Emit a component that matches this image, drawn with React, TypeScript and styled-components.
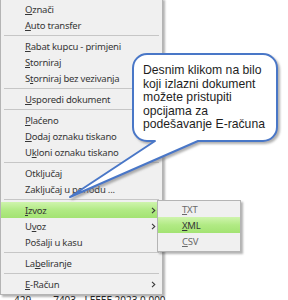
import React from "react";
import styled, { createGlobalStyle } from "styled-components";

const GlobalStyle = createGlobalStyle`
  html, body { margin: 0; padding: 0; background: #ffffff; overflow: hidden; }
  body { font-family: "Noto Sans", "Open Sans", sans-serif; }
`;

const Stage = styled.div`
  position: relative;
  width: 288px;
  height: 300px;
  overflow: hidden;
  background: #ffffff;
`;

const AppBackground = styled.div`
  display: flex;
  flex-direction: column;
  padding-top: 294px;
`;

const BgRow = styled.div`
  display: flex;
  gap: 22px;
  padding-left: 14px;
  font-family: "Noto Sans", sans-serif;
  font-size: 10px;
  line-height: 12px;
  color: #2a2a2a;
  white-space: nowrap;
`;

const Menu = styled.div`
  position: absolute;
  left: 0;
  top: -2px;
  width: 161px;
  background: #f0f0f0;
  border: 1px solid #b4b4b4;
  box-shadow: 2px 2px 2px rgba(0, 0, 0, 0.3);
  padding: 2px 0;
  display: flex;
  flex-direction: column;
`;

const SubMenu = styled(Menu)`
  left: 157px;
  top: 200px;
  width: 82px;
  padding: 0 0 2px 0;
`;

const Item = styled.div<{ $active?: boolean; $dim?: boolean }>`
  height: 16px;
  display: flex;
  align-items: center;
  padding: 0 6px 0 24px;
  font-size: 9.5px;
  letter-spacing: -0.22px;
  color: ${(p) => (p.$dim ? "#6a6a6a" : "#363636")};
  white-space: nowrap;
  background: ${(p) =>
    p.$active ? "linear-gradient(to bottom, #cff4ad 0%, #b1ea84 50%, #a3e372 100%)" : "transparent"};
`;

const Label = styled.span`
  flex: 1;
  & u {
    text-decoration: underline;
    text-underline-offset: 1px;
    text-decoration-thickness: 1px;
  }
`;

const Separator = styled.div`
  height: 5px;
  display: flex;
  align-items: center;
  padding: 0 3px;
  &::after {
    content: "";
    flex: 1;
    height: 1px;
    background: #c6c6c6;
  }
`;

const Chevron = () => (
  <svg width="5" height="7" viewBox="0 0 5 7">
    <path d="M1 0.8 L3.8 3.5 L1 6.2" fill="none" stroke="#3a3a3a" strokeWidth="1.1" />
  </svg>
);

const Bubble = styled.svg`
  position: absolute;
  left: 0;
  top: 0;
  pointer-events: none;
`;

const CalloutText = styled.div`
  position: absolute;
  left: 143px;
  top: 64px;
  width: 134px;
  font-family: "Liberation Sans", Arial, sans-serif;
  font-size: 12.2px;
  line-height: 13.6px;
  color: #1e1e1e;
`;

type Entry = { label: React.ReactNode; arrow?: boolean; active?: boolean } | "sep";

const entries: Entry[] = [
  { label: <><u>O</u>znači</> },
  { label: <><u>A</u>uto transfer</> },
  "sep",
  { label: <><u>R</u>abat kupcu - primjeni</> },
  { label: <><u>S</u>torniraj</> },
  { label: <>S<u>t</u>orniraj bez vezivanja</> },
  "sep",
  { label: <><u>U</u>sporedi dokument</> },
  "sep",
  { label: <><u>P</u>laćeno</> },
  { label: <><u>D</u>odaj oznaku tiskano</> },
  { label: <>U<u>k</u>loni oznaku tiskano</> },
  "sep",
  { label: <>Otključaj</> },
  { label: <>Zaključaj u periodu ...</> },
  "sep",
  { label: <><u>I</u>zvoz</>, arrow: true, active: true },
  { label: <>U<u>v</u>oz</>, arrow: true },
  { label: <>Pošalji u kasu</> },
  "sep",
  { label: <>La<u>b</u>eliranje</> },
  "sep",
  { label: <><u>E</u>-Račun</>, arrow: true },
];

export default function App() {
  return (
    <Stage>
      <GlobalStyle />
      <AppBackground>
        <BgRow>
          <span>429</span>
          <span>7403 - LEEEE 2023 0.000</span>
        </BgRow>
      </AppBackground>

      <Menu>
        {entries.map((e, i) =>
          e === "sep" ? (
            <Separator key={i} />
          ) : (
            <Item key={i} $active={e.active}>
              <Label>{e.label}</Label>
              {e.arrow && <Chevron />}
            </Item>
          )
        )}
      </Menu>

      <SubMenu>
        <Item $dim>
          <Label><u>T</u>XT</Label>
        </Item>
        <Item $active>
          <Label><u>X</u>ML</Label>
        </Item>
        <Item $dim>
          <Label><u>C</u>SV</Label>
        </Item>
      </SubMenu>

      <Bubble width="288" height="300" viewBox="0 0 288 300">
        <defs>
          <filter id="sh" x="-10%" y="-10%" width="130%" height="130%">
            <feDropShadow dx="2" dy="2" stdDeviation="1.2" floodColor="#7a7a7a" floodOpacity="0.6" />
          </filter>
        </defs>
        <path
          d="M147 54 H263 A14 14 0 0 1 277 68 V127 A14 14 0 0 1 263 141 H198 L70 197 L155 141 H147 A14 14 0 0 1 133 127 V68 A14 14 0 0 1 147 54 Z"
          fill="#ffffff"
          stroke="#4a77c7"
          strokeWidth="2"
          strokeLinejoin="round"
          filter="url(#sh)"
        />
      </Bubble>
      <CalloutText>
        Desnim klikom na bilo
        <br />
        koji izlazni dokument
        <br />
        možete pristupiti
        <br />
        opcijama za
        <br />
        podešavanje E-računa
      </CalloutText>
    </Stage>
  );
}
